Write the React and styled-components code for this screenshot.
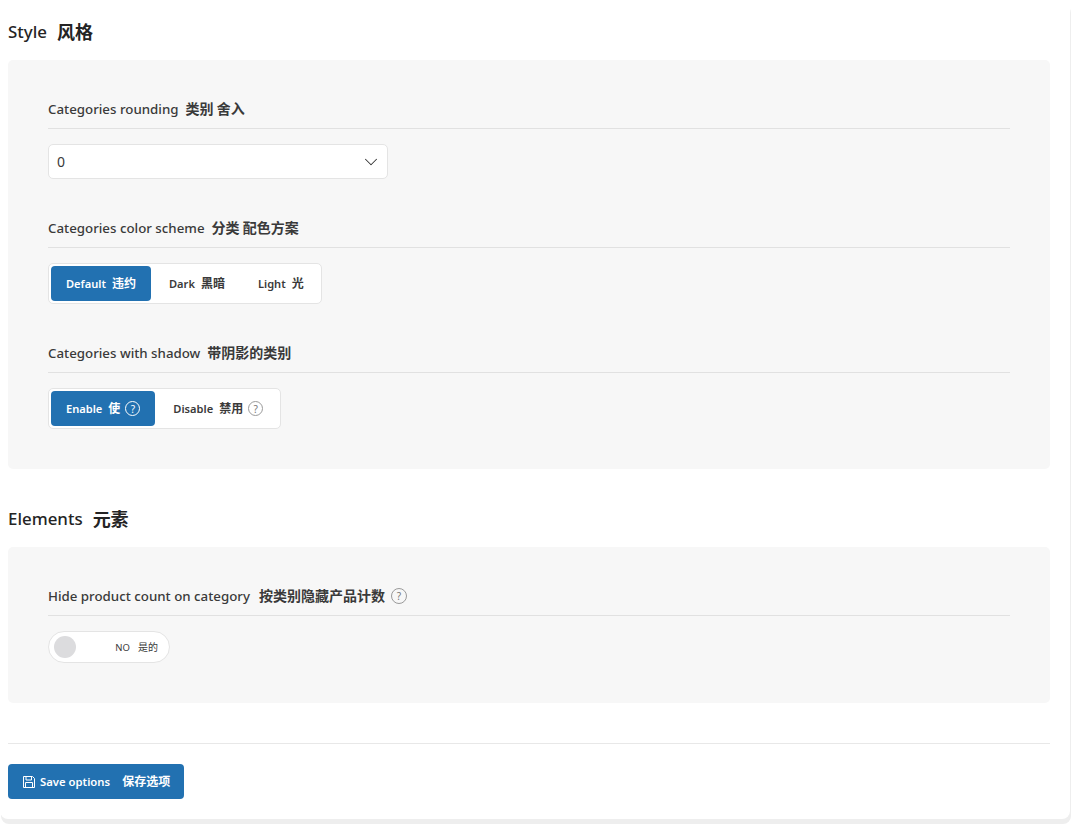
import React from "react";
import styled, { createGlobalStyle } from "styled-components";
import { ChevronDown } from "lucide-react";

const GlobalStyle = createGlobalStyle`
  html, body {
    margin: 0;
    padding: 0;
    background: #fff;
  }
  body {
    font-family: "Noto Sans", "Open Sans", "Noto Sans CJK SC", sans-serif;
    color: #333;
  }
  * {
    box-sizing: border-box;
  }
`;

const Page = styled.div`
  width: 1071px;
  height: 824px;
  overflow: hidden;
  background: #fff;
`;

const Card = styled.div`
  width: 1070px;
  height: 819px;
  background: #fff;
  border-radius: 8px;
  padding: 20px 20px 0 8px;
  box-shadow: 1px 5px 0 #eeeeee;
`;

const Zh = styled.span`
  margin-left: ${(p) => p.$gap || 6}px;
  margin-bottom: 2px;
  font-family: "Noto Sans CJK SC", sans-serif;
  font-size: ${(p) => p.$size || 12}px;
  font-weight: ${(p) => p.$weight || 600};
  line-height: 1;
`;

const SectionTitle = styled.h2`
  display: flex;
  align-items: center;
  height: 23px;
  margin: 0 0 17px;
  font-size: 16.9px;
  font-weight: 500;
  color: #242424;
`;

const Panel = styled.div`
  background: #f7f7f7;
  border-radius: 5px;
  padding: 40px;
  margin-bottom: ${(p) => p.$mb || 38}px;
`;

const Field = styled.div`
  margin-bottom: ${(p) => (p.$last ? "0" : "40px")};
`;

const FieldLabel = styled.div`
  display: flex;
  align-items: center;
  height: 29px;
  padding-bottom: 11px;
  margin-bottom: 15px;
  border-bottom: 1px solid #e1e1e1;
  font-size: 13.3px;
  font-weight: 500;
  color: #3a3a3a;
`;

const SelectBox = styled.div`
  width: 340px;
  height: 35px;
  background: #fff;
  border: 1px solid #e4e4e4;
  border-radius: 5px;
  display: flex;
  align-items: center;
  justify-content: space-between;
  padding: 0 5px 0 8px;
  font-size: 14px;
  color: #3a3a3a;
`;

const Segments = styled.div`
  display: inline-flex;
  gap: 3px;
  height: 41px;
  padding: 2px;
  background: #fff;
  border: 1px solid #e4e4e4;
  border-radius: 5px;
`;

const Segment = styled.div`
  display: flex;
  align-items: center;
  height: 35px;
  padding: 0 15px;
  border-radius: 4px;
  background: ${(p) => (p.$active ? "#2271b1" : "transparent")};
  color: ${(p) => (p.$active ? "#fff" : "#3a3a3a")};
  font-size: 11.1px;
  font-weight: 600;
  white-space: nowrap;
`;

const HelpIcon = styled.span`
  display: inline-flex;
  align-items: center;
  justify-content: center;
  margin-left: ${(p) => p.$gap || 5}px;
  width: ${(p) => p.$size || 15}px;
  height: ${(p) => p.$size || 15}px;
  border-radius: 50%;
  border: 1px solid ${(p) => (p.$light ? "#fff" : "#9a9a9a")};
  color: ${(p) => (p.$light ? "#fff" : "#777")};
  font-size: 10px;
  font-weight: 400;
  line-height: 1;
  flex: none;
`;

const Toggle = styled.div`
  display: flex;
  align-items: center;
  justify-content: space-between;
  width: 122px;
  height: 32px;
  background: #fff;
  border: 1px solid #e4e4e4;
  border-radius: 16px;
  padding: 0 11px 0 5px;
  font-size: 9.5px;
  color: #3a3a3a;
`;

const Knob = styled.span`
  width: 22px;
  height: 22px;
  border-radius: 50%;
  background: #dcdcde;
`;

const Footer = styled.div`
  border-top: 1px solid #e8e8e8;
  padding-top: 20px;
`;

const SaveButton = styled.button`
  display: inline-flex;
  align-items: center;
  width: 176px;
  height: 35px;
  padding: 0 14px;
  border: none;
  border-radius: 4px;
  background: #2271b1;
  color: #fff;
  font-family: inherit;
  font-size: 11.3px;
  font-weight: 600;
  white-space: nowrap;
`;

const SaveIcon = styled.svg`
  width: 14px;
  height: 14px;
  margin-right: 4px;
  flex: none;
`;

export default function App() {
  return (
    <>
      <GlobalStyle />
      <Page>
        <Card>
          <SectionTitle>
            Style<Zh $gap={10} $size={18}>风格</Zh>
          </SectionTitle>
          <Panel>
            <Field>
              <FieldLabel>
                Categories rounding<Zh $gap={7} $size={14}>类别 舍入</Zh>
              </FieldLabel>
              <SelectBox>
                0
                <ChevronDown size={22} strokeWidth={1.1} color="#333" />
              </SelectBox>
            </Field>
            <Field>
              <FieldLabel>
                Categories color scheme<Zh $gap={7} $size={14}>分类 配色方案</Zh>
              </FieldLabel>
              <Segments>
                <Segment $active>
                  Default<Zh>违约</Zh>
                </Segment>
                <Segment>
                  Dark<Zh>黑暗</Zh>
                </Segment>
                <Segment>
                  Light<Zh>光</Zh>
                </Segment>
              </Segments>
            </Field>
            <Field $last>
              <FieldLabel>
                Categories with shadow<Zh $gap={7} $size={14}>带阴影的类别</Zh>
              </FieldLabel>
              <Segments>
                <Segment $active>
                  Enable<Zh>使</Zh>
                  <HelpIcon $light>?</HelpIcon>
                </Segment>
                <Segment>
                  Disable<Zh>禁用</Zh>
                  <HelpIcon>?</HelpIcon>
                </Segment>
              </Segments>
            </Field>
          </Panel>
          <SectionTitle>
            Elements<Zh $gap={10} $size={18}>元素</Zh>
          </SectionTitle>
          <Panel $mb={40}>
            <Field $last>
              <FieldLabel>
                Hide product count on category
                <Zh $gap={9} $size={14}>按类别隐藏产品计数</Zh>
                <HelpIcon $size={16} $gap={6}>?</HelpIcon>
              </FieldLabel>
              <Toggle>
                <Knob />
                <span>
                  NO<Zh $gap={8} $size={10} $weight={400}>是的</Zh>
                </span>
              </Toggle>
            </Field>
          </Panel>
          <Footer>
            <SaveButton>
              <SaveIcon viewBox="0 0 14 14" fill="none" stroke="currentColor" strokeWidth="1">
                <path d="M1.5 1.5h9l2 2v9h-11z" />
                <path d="M4 1.5v3.5h5.5v-3.5" />
                <path d="M3.5 12.5v-5h7v5" />
              </SaveIcon>
              Save options<Zh $gap={12}>保存选项</Zh>
            </SaveButton>
          </Footer>
        </Card>
      </Page>
    </>
  );
}
